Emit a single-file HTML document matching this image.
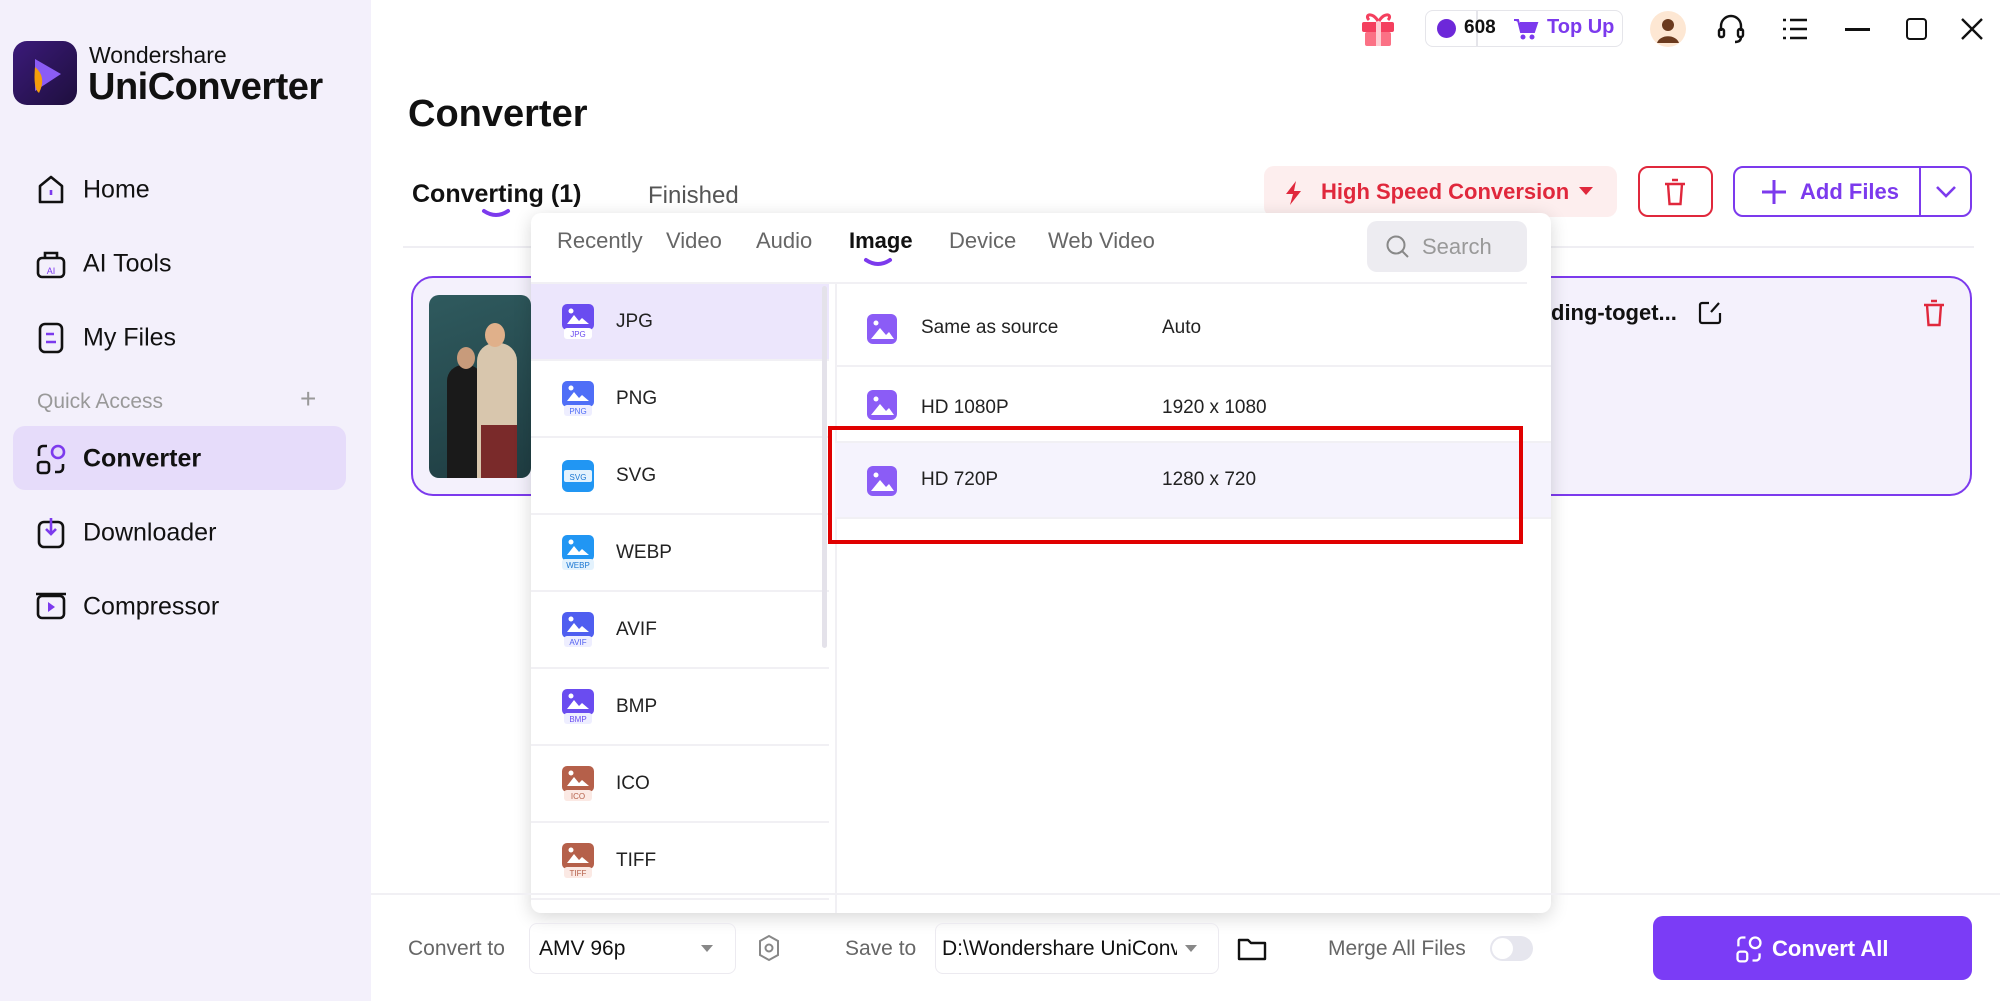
<!DOCTYPE html>
<html><head><meta charset="utf-8">
<style>
*{margin:0;padding:0;box-sizing:border-box}
body{width:2000px;height:1001px;overflow:hidden;background:#fff;font-family:"Liberation Sans",sans-serif;position:relative;color:#111}
.a{position:absolute}
.side{left:0;top:0;width:371px;height:1001px;background:#f3f0fb}
.nav{left:83px;font-size:25px;color:#111;transform:translateY(-50%)}
.ic{position:absolute;transform:translate(-50%,-50%)}
.tab{font-size:22px;color:#666;transform:translateY(-50%)}
.row{left:531px;width:298px;height:77px;border-bottom:2px solid #f1f0f4}
.fi{position:absolute;left:31px;top:20px;width:32px;height:36px}
.fl{position:absolute;left:85px;top:50%;transform:translateY(-50%);font-size:19px;color:#222}
.rrow{left:835px;width:716px;height:76px;border-bottom:2px solid #f1f0f4}
.rt{position:absolute;top:50%;transform:translateY(-50%);font-size:19px;color:#222}
</style></head><body>
<div class="a side"></div>
<div class="a" style="left:13px;top:41px;width:64px;height:64px;border-radius:14px;background:linear-gradient(135deg,#3b1a7a,#1e0f3d)"></div>
<svg class="a" style="left:13px;top:41px" width="64" height="64"><path d="M22 18 L48 33 L22 50 Z" fill="#8b5cf6"/><path d="M22 26 Q34 36 26 52 Q20 48 22 26Z" fill="#f59e0b"/></svg>
<div class="a" style="left:89px;top:42px;font-size:23px;color:#111">Wondershare</div>
<div class="a" style="left:88px;top:66px;font-size:38px;font-weight:bold;color:#111;letter-spacing:-0.5px">UniConverter</div>
<svg class="ic" style="left:51px;top:190px" width="30" height="32" viewBox="0 0 30 32"><path d="M4 12 L15 3 L26 12 V28 H4Z" fill="none" stroke="#111" stroke-width="2.6" stroke-linejoin="round"/><path d="M15 16v5" stroke="#7c3aed" stroke-width="2.6"/></svg>
<div class="a nav" style="top:190px">Home</div>
<svg class="ic" style="left:51px;top:264px" width="32" height="32" viewBox="0 0 32 32"><rect x="3" y="10" width="26" height="19" rx="4" fill="none" stroke="#111" stroke-width="2.6"/><path d="M10 10V5h12v5" fill="none" stroke="#111" stroke-width="2.6"/><text x="16" y="26" font-size="9" text-anchor="middle" fill="#7c3aed" font-family="Liberation Sans">AI</text></svg>
<div class="a nav" style="top:264px">AI Tools</div>
<svg class="ic" style="left:51px;top:338px" width="28" height="34" viewBox="0 0 28 34"><rect x="3" y="3" width="22" height="28" rx="5" fill="none" stroke="#111" stroke-width="2.6"/><path d="M9 13h8M9 21h10" stroke="#7c3aed" stroke-width="2.6"/></svg>
<div class="a nav" style="top:338px">My Files</div>
<div class="a" style="left:37px;top:390px;font-size:21px;color:#999">Quick Access</div>
<div class="a" style="left:300px;top:383px;font-size:28px;color:#999">+</div>
<div class="a" style="left:13px;top:426px;width:333px;height:64px;border-radius:12px;background:#e6dcfa"></div>
<svg class="ic" style="left:51px;top:459px" width="34" height="34" viewBox="0 0 34 34"><circle cx="24" cy="10" r="6" fill="none" stroke="#7c3aed" stroke-width="2.6"/><rect x="4" y="20" width="11" height="11" rx="3" fill="none" stroke="#111" stroke-width="2.6"/><path d="M5 14V8a4 4 0 0 1 4-4h4M29 22v4a4 4 0 0 1-4 4h-4" fill="none" stroke="#111" stroke-width="2.6"/></svg>
<div class="a nav" style="top:459px;font-weight:bold">Converter</div>
<svg class="ic" style="left:51px;top:533px" width="30" height="34" viewBox="0 0 30 34"><rect x="3" y="6" width="24" height="25" rx="5" fill="none" stroke="#111" stroke-width="2.6"/><path d="M15 2v16M10 13l5 5 5-5" fill="none" stroke="#7c3aed" stroke-width="2.6"/></svg>
<div class="a nav" style="top:533px">Downloader</div>
<svg class="ic" style="left:51px;top:607px" width="34" height="32" viewBox="0 0 34 32"><rect x="4" y="5" width="26" height="22" rx="4" fill="none" stroke="#111" stroke-width="2.6"/><path d="M14 11l7 5-7 5z" fill="#7c3aed"/><path d="M2 3h30" stroke="#111" stroke-width="2.6"/></svg>
<div class="a nav" style="top:607px">Compressor</div>

<svg class="ic" style="left:1379px;top:28px" width="44" height="40" viewBox="0 0 44 40"><rect x="5" y="14" width="32" height="10" rx="2" fill="#f43f5e"/><rect x="8" y="24" width="26" height="14" rx="2" fill="#fb7185"/><rect x="19" y="12" width="5" height="26" fill="#fecdd3"/><path d="M21 13c-6-10-14-6-9-1M22 13c6-10 14-6 9-1" fill="none" stroke="#f43f5e" stroke-width="3"/></svg>
<div class="a" style="left:1425px;top:10px;width:198px;height:37px;border:1.5px solid #e5e5ea;border-radius:8px;background:#fff"></div>
<div class="a" style="left:1476px;top:11px;width:1.5px;height:35px;background:#e5e5ea"></div>
<div class="a" style="left:1437px;top:19px;width:19px;height:19px;border-radius:50%;background:#6d28d9"></div>
<div class="a" style="left:1464px;top:17px;font-size:19px;font-weight:bold">608</div>
<svg class="a" style="left:1513px;top:17px" width="26" height="24" viewBox="0 0 26 24"><path d="M1 3h4l3 12h13l3-9H7" fill="#7c3aed" stroke="#7c3aed" stroke-width="2"/><circle cx="10" cy="20" r="2.5" fill="#7c3aed"/><circle cx="19" cy="20" r="2.5" fill="#7c3aed"/></svg>
<div class="a" style="left:1547px;top:16px;font-size:20px;font-weight:bold;color:#7c3aed">Top Up</div>
<svg class="ic" style="left:1668px;top:29px" width="38" height="38"><circle cx="19" cy="19" r="18" fill="#fde7d3"/><circle cx="19" cy="15" r="6" fill="#6b3a1e"/><path d="M8 33c3-9 19-9 22 0" fill="#6b3a1e"/></svg>
<svg class="ic" style="left:1731px;top:29px" width="30" height="32" viewBox="0 0 30 32"><path d="M5 18v-5a10 10 0 0 1 20 0v5" fill="none" stroke="#111" stroke-width="2.4"/><rect x="3" y="16" width="5" height="8" rx="2" fill="none" stroke="#111" stroke-width="2.4"/><rect x="22" y="16" width="5" height="8" rx="2" fill="none" stroke="#111" stroke-width="2.4"/><path d="M25 24q0 5-6 5" fill="none" stroke="#111" stroke-width="2.4"/></svg>
<svg class="ic" style="left:1795px;top:29px" width="28" height="24"><path d="M2 3h3M9 3h17M2 12h3M9 12h17M2 21h3M9 21h17" stroke="#111" stroke-width="2.4"/></svg>
<div class="a" style="left:1845px;top:28px;width:25px;height:2.5px;background:#111"></div>
<div class="a" style="left:1906px;top:18px;width:21px;height:22px;border:2.5px solid #111;border-radius:4px"></div>
<svg class="ic" style="left:1972px;top:29px" width="24" height="24"><path d="M2 2l20 20M22 2L2 22" stroke="#111" stroke-width="2.4"/></svg>

<div class="a" style="left:408px;top:93px;font-size:38px;font-weight:bold">Converter</div>
<div class="a" style="left:412px;top:180px;font-size:25px;font-weight:bold">Converting (1)</div>
<svg class="a" style="left:481px;top:208px" width="30" height="12"><path d="M3 3q12 8 24 0" fill="none" stroke="#7c3aed" stroke-width="4" stroke-linecap="round"/></svg>
<div class="a" style="left:648px;top:182px;font-size:24px;color:#555">Finished</div>
<div class="a" style="left:403px;top:246px;width:1571px;height:2px;background:#efeef3"></div>
<div class="a" style="left:1264px;top:166px;width:353px;height:51px;border-radius:10px;background:#fdeeee"></div>
<svg class="a" style="left:1282px;top:180px" width="22" height="26"><path d="M14 1L4 14h7l-3 11 11-14h-7z" fill="#e0283c"/></svg>
<div class="a" style="left:1321px;top:179px;font-size:22px;font-weight:bold;color:#e0283c">High Speed Conversion</div>
<svg class="a" style="left:1578px;top:186px" width="16" height="10"><path d="M1 1h14L8 9z" fill="#e0283c"/></svg>
<div class="a" style="left:1638px;top:166px;width:75px;height:51px;border:2px solid #e0283c;border-radius:10px"></div>
<svg class="ic" style="left:1675px;top:192px" width="24" height="28"><path d="M2 6h20M9 2h6M5 6l1.5 20h11L19 6" fill="none" stroke="#e0283c" stroke-width="2.4"/></svg>
<div class="a" style="left:1733px;top:166px;width:239px;height:51px;border:2px solid #7c3aed;border-radius:10px"></div>
<div class="a" style="left:1919px;top:167px;width:2px;height:49px;background:#7c3aed"></div>
<svg class="a" style="left:1761px;top:179px" width="26" height="26"><path d="M13 1v24M1 13h24" stroke="#7c3aed" stroke-width="3"/></svg>
<div class="a" style="left:1800px;top:179px;font-size:22px;font-weight:bold;color:#7c3aed">Add Files</div>
<svg class="a" style="left:1935px;top:185px" width="22" height="14"><path d="M2 2l9 9 9-9" fill="none" stroke="#7c3aed" stroke-width="2.6"/></svg>

<div class="a" style="left:411px;top:276px;width:1561px;height:220px;border:2.5px solid #7c3aed;border-radius:22px;background:#f4f1fc"></div>
<div class="a" style="left:429px;top:295px;width:102px;height:183px;border-radius:10px;background:linear-gradient(160deg,#2f5a5e,#1f3d42);overflow:hidden">
<div class="a" style="left:18px;top:70px;width:36px;height:120px;border-radius:16px 16px 0 0;background:#1a1a1a"></div>
<div class="a" style="left:28px;top:52px;width:18px;height:22px;border-radius:50%;background:#c89b7b"></div>
<div class="a" style="left:48px;top:48px;width:40px;height:140px;border-radius:18px 18px 0 0;background:#d8c6ad"></div>
<div class="a" style="left:56px;top:28px;width:20px;height:24px;border-radius:50%;background:#e0b08a"></div>
<div class="a" style="left:52px;top:130px;width:36px;height:60px;background:#7a2a2a"></div>
</div>
<div class="a" style="left:1551px;top:300px;font-size:22px;font-weight:bold">ding-toget...</div>
<svg class="a" style="left:1697px;top:300px" width="26" height="26"><path d="M12 3H5a2 2 0 0 0-2 2v16a2 2 0 0 0 2 2h16a2 2 0 0 0 2-2v-8M14 12l8-9" fill="none" stroke="#111" stroke-width="2.2"/></svg>
<svg class="ic" style="left:1934px;top:313px" width="24" height="28"><path d="M2 6h20M9 2h6M5 6l1.5 20h11L19 6" fill="none" stroke="#e0283c" stroke-width="2.4"/></svg>

<div class="a" style="left:531px;top:213px;width:1020px;height:700px;background:#fff;border-radius:10px;box-shadow:0 4px 18px rgba(0,0,0,.16)"></div>
<div class="a tab" style="left:557px;top:241px">Recently</div>
<div class="a tab" style="left:666px;top:241px">Video</div>
<div class="a tab" style="left:756px;top:241px">Audio</div>
<div class="a tab" style="left:849px;top:241px;color:#111;font-weight:bold">Image</div>
<svg class="a" style="left:863px;top:257px" width="30" height="12"><path d="M3 3q12 8 24 0" fill="none" stroke="#7c3aed" stroke-width="4" stroke-linecap="round"/></svg>
<div class="a tab" style="left:949px;top:241px">Device</div>
<div class="a tab" style="left:1048px;top:241px">Web Video</div>
<div class="a" style="left:1367px;top:221px;width:160px;height:51px;border-radius:10px;background:#edecf1"></div>
<svg class="a" style="left:1385px;top:234px" width="26" height="26"><circle cx="11" cy="11" r="8.5" fill="none" stroke="#888" stroke-width="2"/><path d="M17 17l6 6" stroke="#888" stroke-width="2"/></svg>
<div class="a" style="left:1422px;top:234px;font-size:22px;color:#999">Search</div>
<div class="a" style="left:531px;top:282px;width:996px;height:2px;background:#f1f0f4"></div>
<div class="a" style="left:835px;top:284px;width:2px;height:629px;background:#f1f0f4"></div>

<div class="a row" style="top:284px;background:#ece6fc"><svg class="fi" viewBox="0 0 32 36"><rect x="0" y="0" width="32" height="26" rx="5" fill="#6a4cf0"/><path d="M5 20l7-9 5 6 3-3 7 6z" fill="#fff"/><circle cx="9" cy="7" r="2.5" fill="#fff"/><rect x="2" y="24" width="28" height="11" rx="3" fill="#fff"/><text x="16" y="33" font-size="8" text-anchor="middle" fill="#6a4cf0" font-family="Liberation Sans">JPG</text></svg><div class="fl">JPG</div></div>
<div class="a row" style="top:361px"><svg class="fi" viewBox="0 0 32 36"><rect width="32" height="26" rx="5" fill="#4f6ef7"/><path d="M5 20l7-9 5 6 3-3 7 6z" fill="#fff"/><circle cx="9" cy="7" r="2.5" fill="#fff"/><rect x="2" y="24" width="28" height="11" rx="3" fill="#eef"/><text x="16" y="33" font-size="8" text-anchor="middle" fill="#4f6ef7" font-family="Liberation Sans">PNG</text></svg><div class="fl">PNG</div></div>
<div class="a row" style="top:438px"><svg class="fi" viewBox="0 0 32 36"><rect y="2" width="32" height="32" rx="6" fill="#2196f3"/><rect x="2" y="12" width="28" height="12" rx="2" fill="#e3f2fd"/><text x="16" y="22" font-size="8" text-anchor="middle" fill="#1976d2" font-family="Liberation Sans">SVG</text></svg><div class="fl">SVG</div></div>
<div class="a row" style="top:515px"><svg class="fi" viewBox="0 0 32 36"><rect width="32" height="26" rx="5" fill="#2196f3"/><path d="M5 20l7-9 5 6 3-3 7 6z" fill="#fff"/><circle cx="9" cy="7" r="2.5" fill="#fff"/><rect x="0" y="24" width="32" height="11" rx="3" fill="#e3f2fd"/><text x="16" y="33" font-size="8" text-anchor="middle" fill="#1976d2" font-family="Liberation Sans">WEBP</text></svg><div class="fl">WEBP</div></div>
<div class="a row" style="top:592px"><svg class="fi" viewBox="0 0 32 36"><rect width="32" height="26" rx="5" fill="#4f5ef0"/><path d="M5 20l7-9 5 6 3-3 7 6z" fill="#fff"/><circle cx="9" cy="7" r="2.5" fill="#fff"/><rect x="2" y="24" width="28" height="11" rx="3" fill="#eef"/><text x="16" y="33" font-size="8" text-anchor="middle" fill="#4f5ef0" font-family="Liberation Sans">AVIF</text></svg><div class="fl">AVIF</div></div>
<div class="a row" style="top:669px"><svg class="fi" viewBox="0 0 32 36"><rect width="32" height="26" rx="5" fill="#6a4cf0"/><path d="M5 20l7-9 5 6 3-3 7 6z" fill="#fff"/><circle cx="9" cy="7" r="2.5" fill="#fff"/><rect x="2" y="24" width="28" height="11" rx="3" fill="#eef"/><text x="16" y="33" font-size="8" text-anchor="middle" fill="#6a4cf0" font-family="Liberation Sans">BMP</text></svg><div class="fl">BMP</div></div>
<div class="a row" style="top:746px"><svg class="fi" viewBox="0 0 32 36"><rect width="32" height="26" rx="5" fill="#b5604a"/><path d="M5 20l7-9 5 6 3-3 7 6z" fill="#fff"/><circle cx="9" cy="7" r="2.5" fill="#fff"/><rect x="2" y="24" width="28" height="11" rx="3" fill="#fbe9e4"/><text x="16" y="33" font-size="8" text-anchor="middle" fill="#b5604a" font-family="Liberation Sans">ICO</text></svg><div class="fl">ICO</div></div>
<div class="a row" style="top:823px"><svg class="fi" viewBox="0 0 32 36"><rect width="32" height="26" rx="5" fill="#b5604a"/><path d="M5 20l7-9 5 6 3-3 7 6z" fill="#fff"/><circle cx="9" cy="7" r="2.5" fill="#fff"/><rect x="2" y="24" width="28" height="11" rx="3" fill="#fbe9e4"/><text x="16" y="33" font-size="8" text-anchor="middle" fill="#b5604a" font-family="Liberation Sans">TIFF</text></svg><div class="fl">TIFF</div></div>
<div class="a" style="left:822px;top:286px;width:5px;height:362px;border-radius:3px;background:#e4e2ea"></div>

<div class="a rrow" style="top:291px"><svg class="a" style="left:32px;top:23px" width="30" height="30" viewBox="0 0 30 30"><rect width="30" height="30" rx="6" fill="#8b5cf6"/><path d="M4 25l9-11 6 7 3-3 5 7z" fill="#fff"/><circle cx="9" cy="9" r="2.5" fill="#fff"/></svg><div class="rt" style="left:86px">Same as source</div><div class="rt" style="left:327px">Auto</div></div>
<div class="a rrow" style="top:367px"><svg class="a" style="left:32px;top:23px" width="30" height="30" viewBox="0 0 30 30"><rect width="30" height="30" rx="6" fill="#8b5cf6"/><path d="M4 25l9-11 6 7 3-3 5 7z" fill="#fff"/><circle cx="9" cy="9" r="2.5" fill="#fff"/></svg><div class="rt" style="left:86px;top:56%">HD 1080P</div><div class="rt" style="left:327px;top:56%">1920 x 1080</div></div>
<div class="a rrow" style="top:443px;background:#f5f3fd"><svg class="a" style="left:32px;top:23px" width="30" height="30" viewBox="0 0 30 30"><rect width="30" height="30" rx="6" fill="#8b5cf6"/><path d="M4 25l9-11 6 7 3-3 5 7z" fill="#fff"/><circle cx="9" cy="9" r="2.5" fill="#fff"/></svg><div class="rt" style="left:86px">HD 720P</div><div class="rt" style="left:327px">1280 x 720</div></div>
<div class="a" style="left:828px;top:426px;width:695px;height:118px;border:4px solid #e00000"></div>

<div class="a" style="left:371px;top:893px;width:1629px;height:2px;background:#f1f0f4"></div>
<div class="a" style="left:408px;top:937px;font-size:21px;color:#666">Convert to</div>
<div class="a" style="left:529px;top:923px;width:207px;height:51px;border:1.5px solid #eceaf0;border-radius:8px"></div>
<div class="a" style="left:539px;top:937px;font-size:21px">AMV 96p</div>
<svg class="a" style="left:700px;top:944px" width="14" height="9"><path d="M1 1h12L7 8z" fill="#888"/></svg>
<svg class="ic" style="left:769px;top:948px" width="24" height="28"><path d="M12 2l9 5v14l-9 5-9-5V7z" fill="none" stroke="#888" stroke-width="2"/><circle cx="12" cy="14" r="3.5" fill="none" stroke="#888" stroke-width="2"/></svg>
<div class="a" style="left:845px;top:937px;font-size:21px;color:#666">Save to</div>
<div class="a" style="left:935px;top:923px;width:284px;height:51px;border:1.5px solid #eceaf0;border-radius:8px"></div>
<div class="a" style="left:942px;top:937px;width:235px;font-size:21px;white-space:nowrap;overflow:hidden">D:\Wondershare UniConverter</div>
<svg class="a" style="left:1184px;top:944px" width="14" height="9"><path d="M1 1h12L7 8z" fill="#888"/></svg>
<svg class="ic" style="left:1252px;top:949px" width="30" height="26"><path d="M2 4h9l3 3h14v16H2z" fill="none" stroke="#111" stroke-width="2.4" stroke-linejoin="round"/></svg>
<div class="a" style="left:1328px;top:937px;font-size:21px;color:#666">Merge All Files</div>
<div class="a" style="left:1490px;top:936px;width:43px;height:25px;border-radius:13px;background:#e6e6ee"></div>
<div class="a" style="left:1492px;top:938px;width:21px;height:21px;border-radius:50%;background:#fff"></div>
<div class="a" style="left:1653px;top:916px;width:319px;height:64px;border-radius:10px;background:#7b3cf6"></div>
<svg class="a" style="left:1734px;top:934px" width="30" height="30" viewBox="0 0 34 34"><circle cx="24" cy="10" r="6" fill="none" stroke="#fff" stroke-width="2.6"/><rect x="4" y="20" width="11" height="11" rx="3" fill="none" stroke="#fff" stroke-width="2.6"/><path d="M5 14V8a4 4 0 0 1 4-4h4M29 22v4a4 4 0 0 1-4 4h-4" fill="none" stroke="#fff" stroke-width="2.6"/></svg>
<div class="a" style="left:1772px;top:936px;font-size:22px;font-weight:bold;color:#fff">Convert All</div>
</body></html>
